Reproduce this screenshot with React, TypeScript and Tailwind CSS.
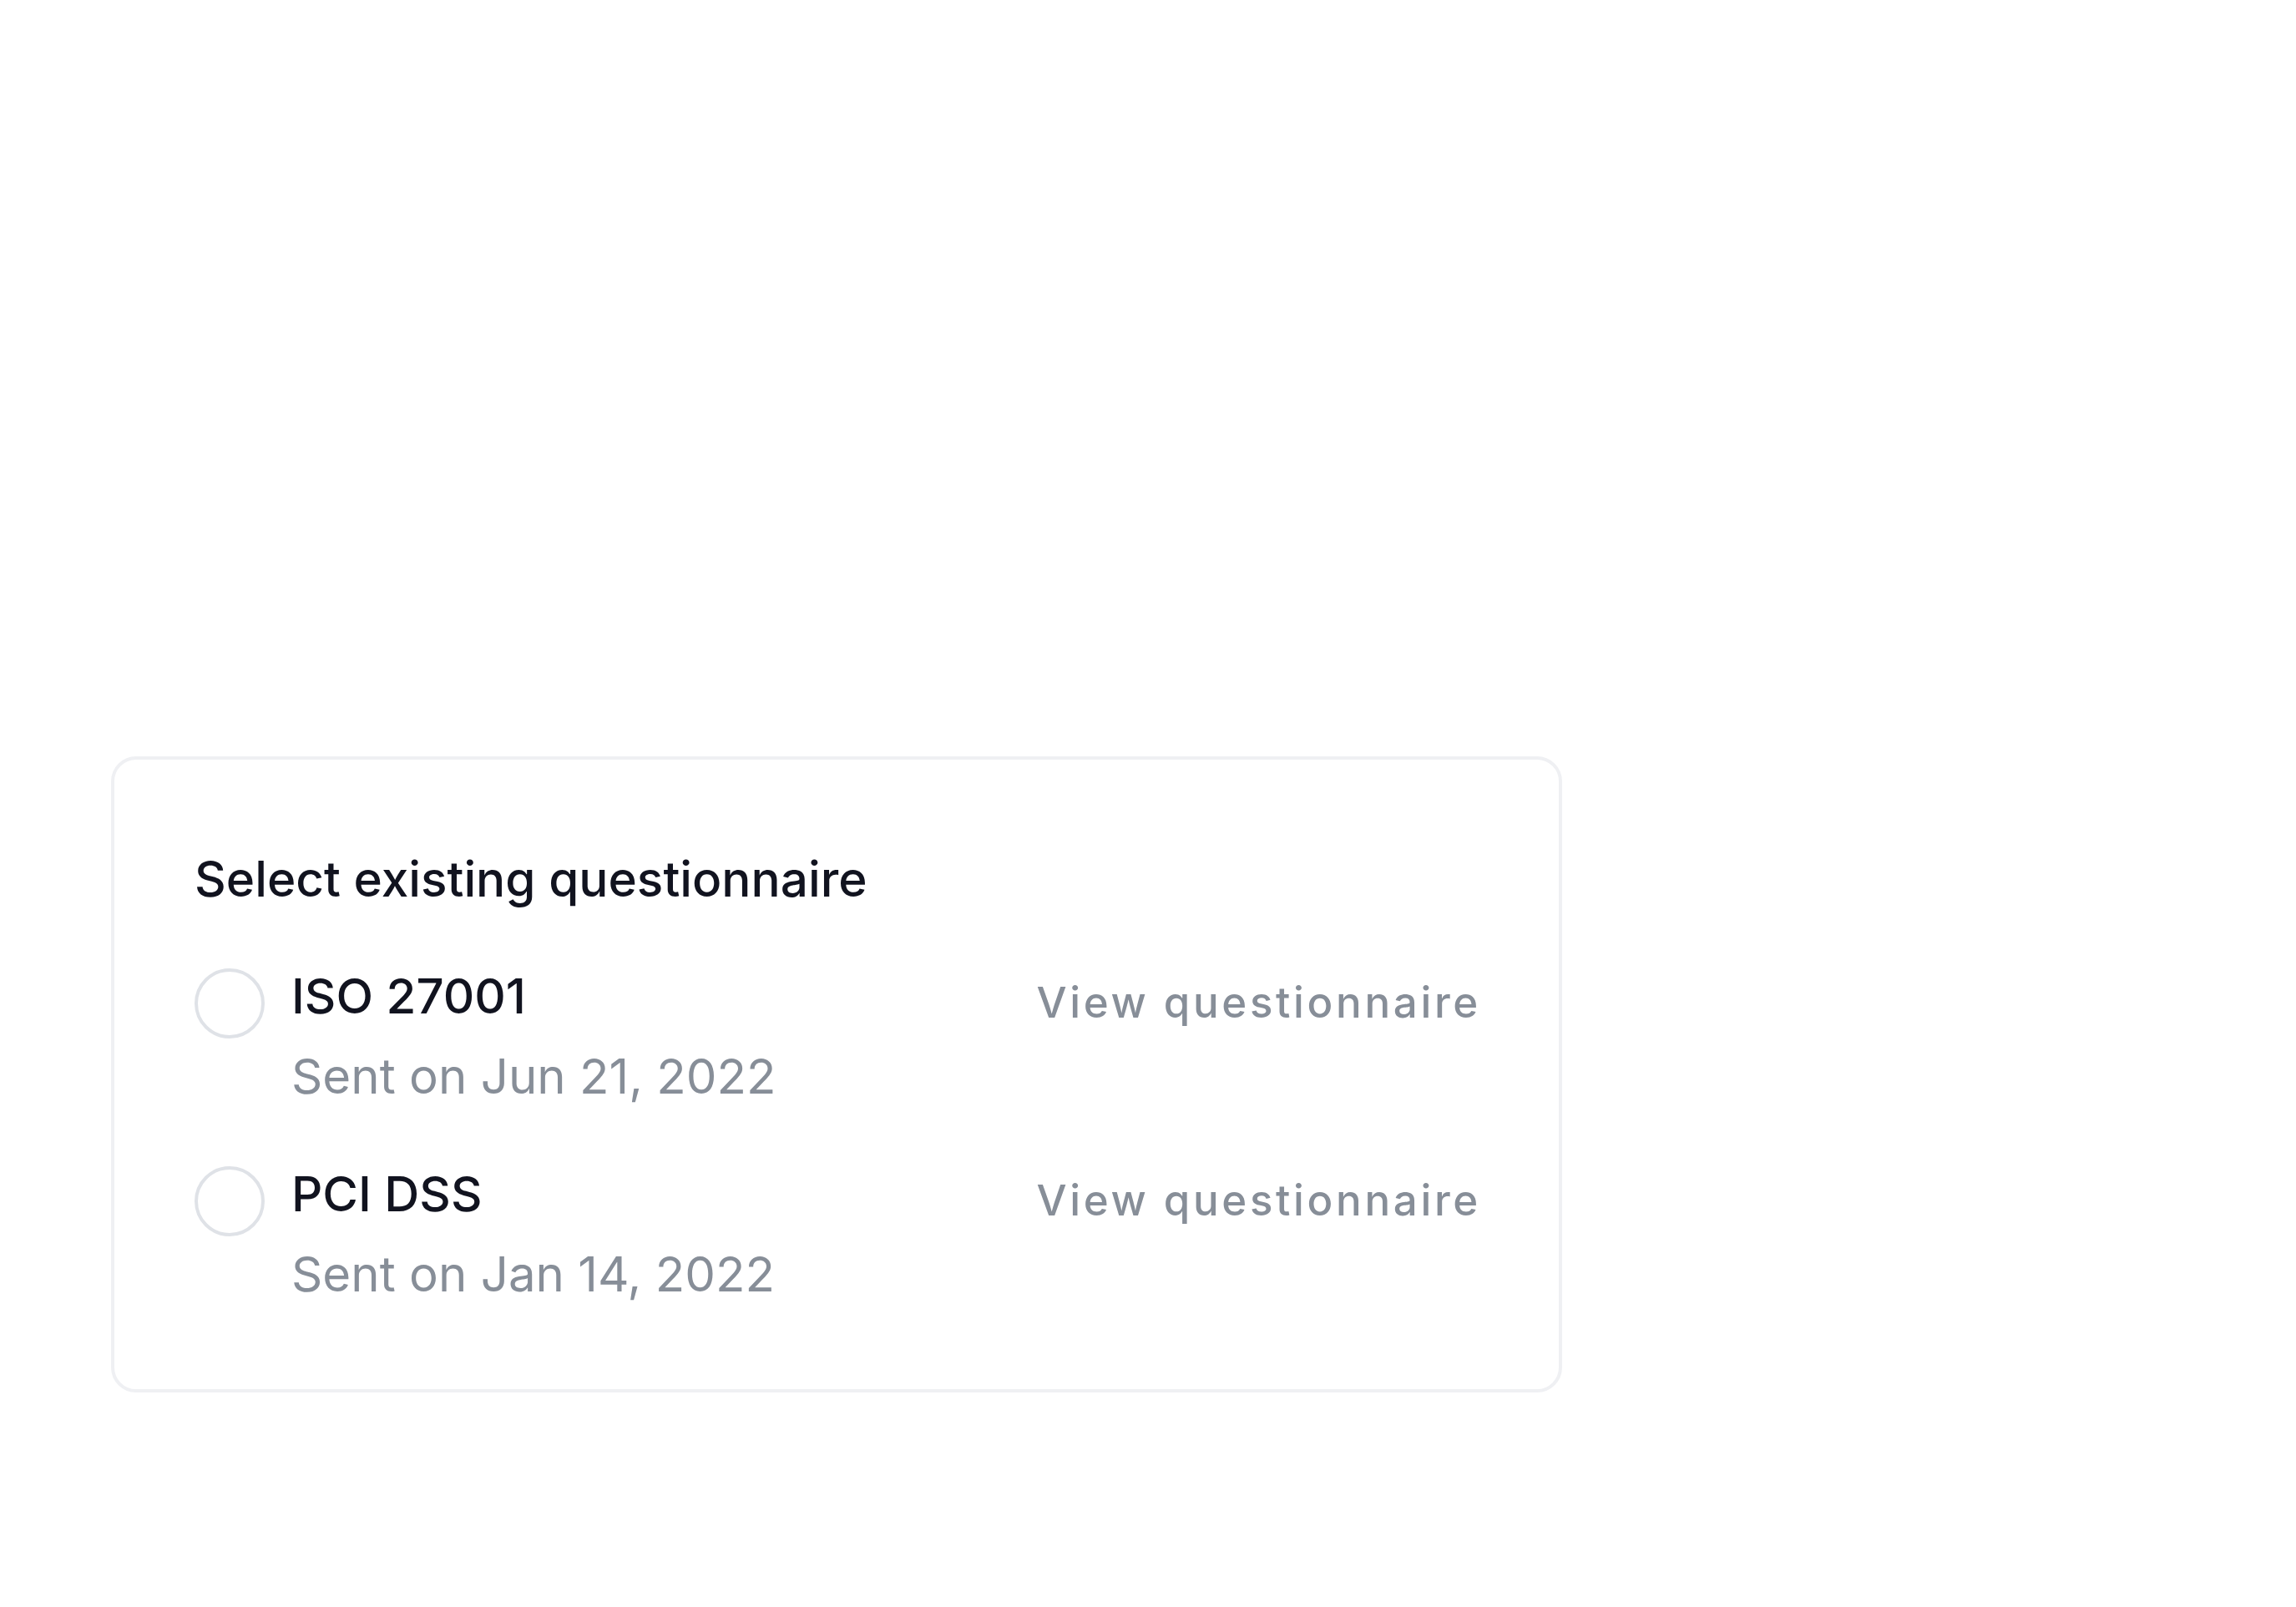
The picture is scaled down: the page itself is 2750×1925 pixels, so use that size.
import React from "react";

const items = [
  { name: "ISO 27001", date: "Sent on Jun 21, 2022" },
  { name: "PCI DSS", date: "Sent on Jan 14, 2022" },
];

export default function App() {
  return (
    <div
      className="w-[2750px] h-[1925px] bg-white pt-[906px] pl-[133px]"
      style={{ fontFamily: "Inter, 'Noto Sans', sans-serif" }}
    >
      <div className="w-[1738px] rounded-[30px] border-[4px] border-[#eff0f3] bg-white pt-[103px] pb-[90px] pl-[96px] pr-[93px]">
        <h2 className="text-[58.5px] leading-[80px] font-medium text-[#11131f]">
          Select existing questionnaire
        </h2>
        <div className="mt-[52px] flex flex-col gap-[45px]">
          {items.map((it) => (
            <div key={it.name} className="flex items-start justify-between">
              <div className="flex items-start gap-[32px]">
                <div className="mt-[15px] w-[84px] h-[84px] rounded-full border-[4px] border-[#dfe2e7] bg-white shrink-0" />
                <div className="flex flex-col">
                  <span className="text-[58.2px] leading-[96px] font-medium text-[#11131f]">
                    {it.name}
                  </span>
                  <span className="text-[58.2px] leading-[96px] font-normal text-[#878e98]">
                    {it.date}
                  </span>
                </div>
              </div>
              <span className="mt-[14px] text-[51px] leading-[84px] font-medium tracking-[0.072em] text-[#878e98]">
                View questionnaire
              </span>
            </div>
          ))}
        </div>
      </div>
    </div>
  );
}
